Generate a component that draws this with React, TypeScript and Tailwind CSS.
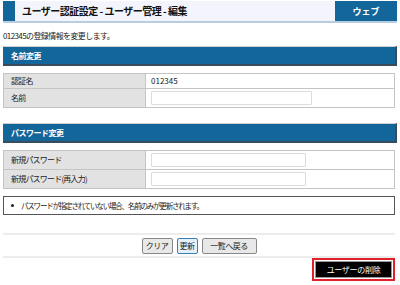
import React from "react";

const jp = { fontFamily: '"Noto Sans CJK JP", "Noto Sans", sans-serif' };

function SectionBar({ title }: { title: string }) {
  return (
    <div className="mx-[3px] h-[20px] bg-[#13669a] border-t border-t-[#d0d0d0] border-b-2 border-b-[#3a4c5c] border-r-2 border-r-[#3a4c5c] flex items-center pl-[8px]">
      <span className="text-white text-[8px] font-bold leading-none tracking-[-0.5px]">{title}</span>
    </div>
  );
}

function Row({ label, children, last, h }: { label: string; children: React.ReactNode; last?: boolean; h: string }) {
  return (
    <div className={`flex ${h} ${last ? "" : "border-b border-[#c4c4c4]"}`}>
      <div className="w-[142px] bg-[#e2e2e2] border-r border-[#c4c4c4] flex items-center pl-[7px] text-[8px] leading-none tracking-[-0.8px] text-[#222]">{label}</div>
      <div className="flex-1 bg-white flex items-center pl-[5px] text-[8px] leading-none text-[#222]">{children}</div>
    </div>
  );
}

function Input({ w }: { w: string }) {
  return <div className={`${w} h-[14px] border border-[#dcdcdc] bg-white rounded-[1px]`} />;
}

export default function App() {
  return (
    <div className="w-[400px] h-[285px] bg-white relative overflow-hidden" style={jp}>
      {/* header */}
      <div className="mx-[3px] mt-[1px] flex h-[22px] border-b-2 border-[#b8cde0]">
        <div className="w-[12px] bg-[#13669a]" />
        <div className="flex-1 bg-[#f3f4fc] flex items-center pl-[7px]">
          <span className="text-[10px] font-bold text-[#111] leading-none tracking-[-0.5px]">ユーザー認証設定 - ユーザー管理 - 編集</span>
        </div>
        <div className="w-[62px] bg-[#13669a] flex items-center justify-center">
          <span className="text-white text-[9px] font-bold leading-none">ウェブ</span>
        </div>
      </div>

      <div className="mt-[8px] ml-[3px] h-[10px] text-[8px] tracking-[-0.6px] text-[#222] leading-[10px]">012345の登録情報を変更します。</div>

      <div className="mt-[5px]">
        <SectionBar title="名前変更" />
      </div>
      <div className="mx-[3px] mt-[7px] mr-[5px] border border-[#c4c4c4]">
        <Row label="認証名" h="h-[15px]">012345</Row>
        <Row label="名前" h="h-[18px]" last>
          <Input w="w-[161px]" />
        </Row>
      </div>

      <div className="mt-[15px]">
        <SectionBar title="パスワード変更" />
      </div>
      <div className="mx-[3px] mt-[7px] mr-[5px] border border-[#c4c4c4]">
        <Row label="新規パスワード" h="h-[19px]">
          <Input w="w-[155px]" />
        </Row>
        <Row label="新規パスワード(再入力)" h="h-[18px]" last>
          <Input w="w-[155px]" />
        </Row>
      </div>

      <div className="ml-[3px] mr-[5px] mt-[7px] h-[19px] border border-[#555] flex items-center pl-[7px] text-[7.5px] leading-none tracking-[-1.2px] text-[#222]">
        <span className="w-[3px] h-[3px] rounded-full bg-[#222] mr-[7px]" />
        <span>パスワードが指定されていない場合、名前のみが更新されます。</span>
      </div>

      <div className="mx-[3px] mr-[5px] mt-[18px] h-[25px] border-t-2 border-b-2 border-[#ececec] flex items-center justify-center gap-[4px]">
        <button className="h-[16px] w-[31px] text-[8px] tracking-[-0.5px] text-[#222] bg-[#e8e8e8] border border-[#888] rounded-[2px] leading-none">クリア</button>
        <button className="h-[16px] w-[21px] text-[8px] tracking-[-0.5px] text-[#222] bg-[#e4f0fa] border border-[#3c7fb1] rounded-[2px] leading-none">更新</button>
        <button className="h-[16px] w-[55px] text-[8px] tracking-[-0.5px] text-[#222] bg-[#e8e8e8] border border-[#888] rounded-[2px] leading-none">一覧へ戻る</button>
      </div>

      <div className="flex justify-end mr-[5px]">
        <div className="border-2 border-[#e0202a] p-[1px]">
          <button className="h-[17px] w-[77px] bg-black text-white text-[8px] tracking-[-0.3px] border border-[#999] leading-none block">ユーザーの削除</button>
        </div>
      </div>
    </div>
  );
}
